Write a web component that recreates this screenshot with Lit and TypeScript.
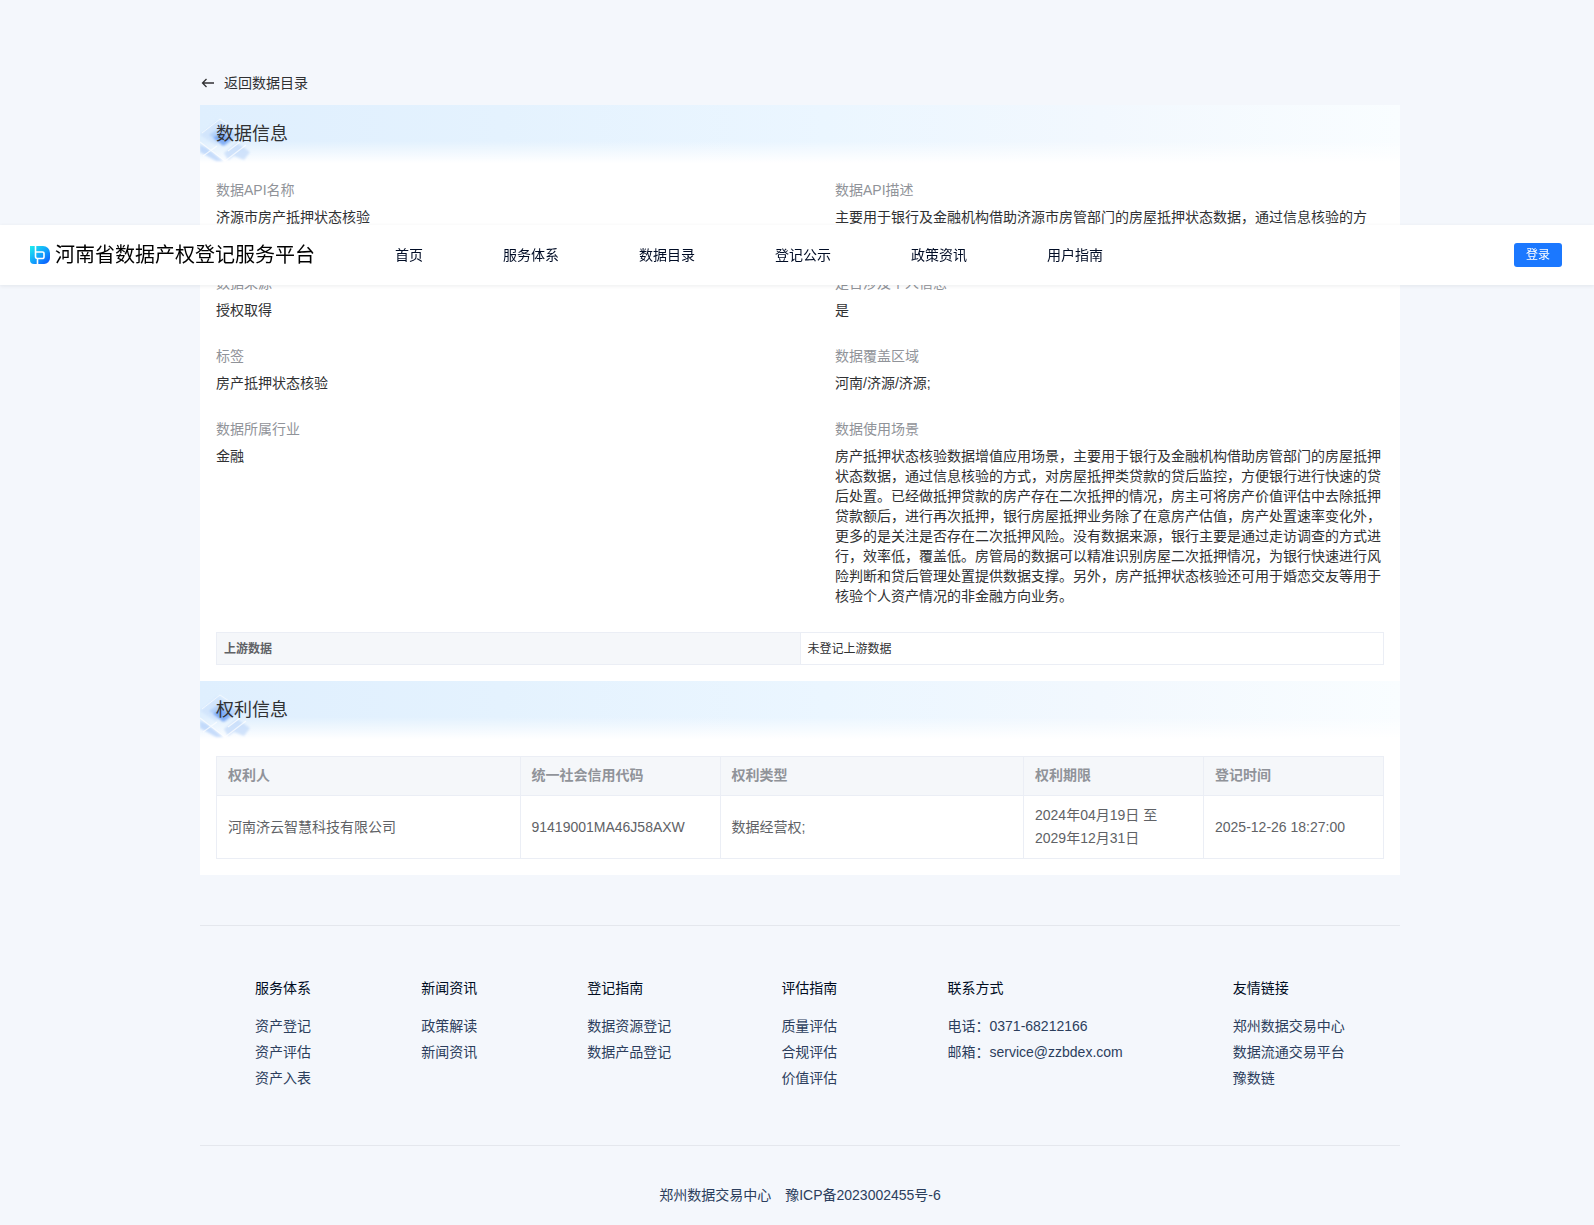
import { LitElement, html, css, svg } from "lit";
import { customElement } from "lit/decorators.js";

interface Field {
  label: string;
  value: string;
}

interface LinkGroup {
  title: string;
  links: string[];
}

const NAV = ["首页", "服务体系", "数据目录", "登记公示", "政策资讯", "用户指南"];

const FIELDS: Field[] = [
  { label: "数据API名称", value: "济源市房产抵押状态核验" },
  {
    label: "数据API描述",
    value:
      "主要用于银行及金融机构借助济源市房管部门的房屋抵押状态数据，通过信息核验的方式，对房屋抵押类贷款进行贷后监控。",
  },
  { label: "数据来源", value: "授权取得" },
  { label: "是否涉及个人信息", value: "是" },
  { label: "标签", value: "房产抵押状态核验" },
  { label: "数据覆盖区域", value: "河南/济源/济源;" },
  { label: "数据所属行业", value: "金融" },
  {
    label: "数据使用场景",
    value:
      "房产抵押状态核验数据增值应用场景，主要用于银行及金融机构借助房管部门的房屋抵押状态数据，通过信息核验的方式，对房屋抵押类贷款的贷后监控，方便银行进行快速的贷后处置。已经做抵押贷款的房产存在二次抵押的情况，房主可将房产价值评估中去除抵押贷款额后，进行再次抵押，银行房屋抵押业务除了在意房产估值，房产处置速率变化外，更多的是关注是否存在二次抵押风险。没有数据来源，银行主要是通过走访调查的方式进行，效率低，覆盖低。房管局的数据可以精准识别房屋二次抵押情况，为银行快速进行风险判断和贷后管理处置提供数据支撑。另外，房产抵押状态核验还可用于婚恋交友等用于核验个人资产情况的非金融方向业务。",
  },
];

const GROUPS: LinkGroup[] = [
  { title: "服务体系", links: ["资产登记", "资产评估", "资产入表"] },
  { title: "新闻资讯", links: ["政策解读", "新闻资讯"] },
  { title: "登记指南", links: ["数据资源登记", "数据产品登记"] },
  { title: "评估指南", links: ["质量评估", "合规评估", "价值评估"] },
  { title: "联系方式", links: ["电话：0371-68212166", "邮箱：service@zzbdex.com"] },
  { title: "友情链接", links: ["郑州数据交易中心", "数据流通交易平台", "豫数链"] },
];

const cube = svg`
  <defs>
    <filter id="soft" x="-10%" y="-10%" width="120%" height="120%">
      <feGaussianBlur stdDeviation="1.2" />
    </filter>
  </defs>
  <g filter="url(#soft)">
    <path d="M0 30 18 15l16 10-18 15z" fill="#c9e0fb" opacity=".6"/>
    <path d="M9 30 22 21l17 9-14 11z" fill="#9cc2f8" opacity=".55"/>
    <path d="M13 33l8-6 11 7-9 7z" fill="#5b92f2" opacity=".6"/>
    <path d="M0 40 7 43l16 13h-7L0 47z" fill="#a6c8f8" opacity=".6"/>
    <path d="M24 48l13-10 13 9-6 8-10-4-6 4z" fill="#b9d3f9" opacity=".6"/>
  </g>
  <path d="M0 37 25 56 46 40M3 51l14-10M28 46l12-9" fill="none" stroke="#fff" stroke-width="1.200" opacity=".7"/>
  <path d="M2 28 20 14l12 8" fill="none" stroke="#fff" opacity=".6"/>
`;

@customElement("section-banner")
export class SectionBanner extends LitElement {
  static properties = { heading: { type: String } };
  declare heading: string;

  static styles = css`
    :host {
      display: block;
    }
    .banner {
      position: relative;
      padding: 16px;
      background: linear-gradient(180deg, rgba(255, 255, 255, 0) 36px, #fff 58px),
        linear-gradient(90deg, #dfeffe 0%, #e4f2fe 25%, #ebf6ff 52%, #f2f8fe 75%, #f9fdff 100%);
    }
    .art {
      position: absolute;
      left: 0;
      top: 0;
      width: 56px;
      height: 59px;
    }
    .title {
      position: relative;
      margin: 0;
      font-size: 18px;
      font-weight: 400;
      line-height: 27px;
      color: #303133;
    }
  `;

  render() {
    return html`<div class="banner">
      <svg class="art" viewBox="0 0 56 59" aria-hidden="true">${cube}</svg>
      <h2 class="title">${this.heading}</h2>
    </div>`;
  }
}

@customElement("app-root")
export class AppRoot extends LitElement {
  static styles = css`
    :host {
      display: block;
      min-height: 100vh;
      background: #f4f7fc;
      color: #303133;
      font-family: "Liberation Sans", "Noto Sans CJK SC", sans-serif;
      font-size: 14px;
      line-height: 20px;
    }
    * {
      box-sizing: border-box;
    }
    a {
      color: inherit;
      text-decoration: none;
    }
    .topbar {
      position: fixed;
      z-index: 10;
      top: 225px;
      left: 0;
      right: 0;
      display: flex;
      align-items: center;
      height: 60px;
      padding: 0 32px 0 30px;
      background: #fff;
      box-shadow: 0 1px 4px rgba(0, 21, 41, 0.08);
      color: #000c25;
    }
    .brand {
      display: flex;
      align-items: center;
      gap: 5px;
      font-size: 20px;
      line-height: 28px;
      color: #000;
    }
    .logo {
      width: 20px;
      height: 20px;
    }
    .nav {
      display: flex;
      flex: 1;
      gap: 80px;
      padding-left: 80px;
    }
    .login {
      width: 48px;
      height: 24px;
      padding: 0;
      border: 0;
      border-radius: 3px;
      background: #1b78ff;
      color: #fff;
      font-family: inherit;
      font-size: 12px;
      line-height: 24px;
    }
    .page {
      display: grid;
      grid-template-columns: 200px minmax(0, 1200px) 1fr;
      padding-top: 73px;
    }
    .content {
      grid-column: 2;
    }
    .back {
      display: inline-flex;
      align-items: center;
      gap: 8px;
      margin-bottom: 12px;
    }
    .arrow {
      width: 16px;
      height: 16px;
    }
    .card {
      background: #fff;
    }
    .body {
      padding: 16px;
    }
    .fields {
      display: grid;
      grid-template-columns: 1fr 1fr;
      column-gap: 70px;
      row-gap: 26px;
      margin: 0 0 26px;
    }
    .label {
      margin-bottom: 7px;
      color: #909399;
    }
    .value {
      margin: 0;
    }
    table {
      width: 100%;
      border-collapse: collapse;
      table-layout: fixed;
    }
    th,
    td {
      border: 1px solid #ebeef5;
      text-align: left;
    }
    th {
      background: #f5f7fa;
      font-weight: 700;
    }
    .source th,
    .source td {
      padding: 5px 7px 3px;
      font-size: 12px;
      line-height: 23px;
    }
    .source th {
      color: #606266;
    }
    .rights th,
    .rights td {
      padding: 8px 11px;
      line-height: 23px;
    }
    .rights th {
      color: #909399;
      padding: 7px 11px 8px;
    }
    .rights td {
      color: #606266;
    }
    .code {
      width: 200px;
    }
    .date {
      width: 180px;
    }
    .footer {
      margin-top: 50px;
      color: #2c3e5d;
    }
    .groups {
      display: flex;
      justify-content: space-around;
      padding: 51px 0 54px;
      border: solid #e4e7ed;
      border-width: 1px 0;
    }
    .group-title {
      margin: 0 0 14px;
      font-size: 14px;
      font-weight: 400;
      line-height: 22px;
      color: #000c1f;
    }
    .links {
      margin: 0;
      padding: 0;
      list-style: none;
      line-height: 26px;
    }
    .legal {
      display: flex;
      justify-content: center;
      gap: 14px;
      padding: 39px 0 20px;
    }
  `;

  private renderHeader() {
    return html`<header class="topbar">
      <a class="brand" href="#">
        <svg class="logo" viewBox="0 0 20 20" aria-hidden="true">
          <defs>
            <linearGradient id="logo-fill" x1="0" y1="0" x2="1" y2="1">
              <stop offset="0" stop-color="#1ff0ee" />
              <stop offset=".5" stop-color="#12a5fb" />
              <stop offset="1" stop-color="#0a50ff" />
            </linearGradient>
          </defs>
          <path
            d="M0 1h13a7 7 0 0 1 7 7v5a6 6 0 0 1-6 6H4a4 4 0 0 1-4-4z"
            fill="url(#logo-fill)"
          />
          <path
            d="M5.500 0v11.500a2 2 0 0 0 2 2H12.500a1.500 1.500 0 0 0 1.500-1.500V8.500a1.500 1.500 0 0 0-1.500-1.500H6M7.500 13.500V20"
            fill="none"
            stroke="#fff"
            stroke-width="1.600"
          />
        </svg>
        <span>河南省数据产权登记服务平台</span>
      </a>
      <nav class="nav">${NAV.map((n) => html`<a href="#">${n}</a>`)}</nav>
      <button class="login" type="button">登录</button>
    </header>`;
  }

  private renderRights() {
    return html`<table class="rights">
      <colgroup>
        <col />
        <col class="code" />
        <col />
        <col class="date" />
        <col class="date" />
      </colgroup>
      <thead>
        <tr>
          <th>权利人</th>
          <th>统一社会信用代码</th>
          <th>权利类型</th>
          <th>权利期限</th>
          <th>登记时间</th>
        </tr>
      </thead>
      <tbody>
        <tr>
          <td>河南济云智慧科技有限公司</td>
          <td>91419001MA46J58AXW</td>
          <td>数据经营权;</td>
          <td>2024年04月19日 至 2029年12月31日</td>
          <td>2025-12-26 18:27:00</td>
        </tr>
      </tbody>
    </table>`;
  }

  render() {
    return html`
      ${this.renderHeader()}
      <div class="page">
        <div class="content">
          <a class="back" href="#">
            <svg class="arrow" viewBox="0 0 16 16" aria-hidden="true">
              <path
                d="M14 8H2.500M6.500 4 2.500 8l4 4"
                fill="none"
                stroke="#303133"
                stroke-width="1.300"
              />
            </svg>
            <span>返回数据目录</span>
          </a>
          <main class="card">
            <section-banner heading="数据信息"></section-banner>
            <div class="body">
              <dl class="fields">
                ${FIELDS.map(
                  (f) => html`<div>
                    <dt class="label">${f.label}</dt>
                    <dd class="value">${f.value}</dd>
                  </div>`,
                )}
              </dl>
              <table class="source">
                <tbody>
                  <tr>
                    <th scope="row">上游数据</th>
                    <td>未登记上游数据</td>
                  </tr>
                </tbody>
              </table>
            </div>
            <section-banner heading="权利信息"></section-banner>
            <div class="body">${this.renderRights()}</div>
          </main>
          <footer class="footer">
            <div class="groups">
              ${GROUPS.map(
                (g) => html`<section>
                  <h3 class="group-title">${g.title}</h3>
                  <ul class="links">
                    ${g.links.map((l) => html`<li><a href="#">${l}</a></li>`)}
                  </ul>
                </section>`,
              )}
            </div>
            <div class="legal">
              <span>郑州数据交易中心</span>
              <a href="#">豫ICP备2023002455号-6</a>
            </div>
          </footer>
        </div>
      </div>
    `;
  }
}
